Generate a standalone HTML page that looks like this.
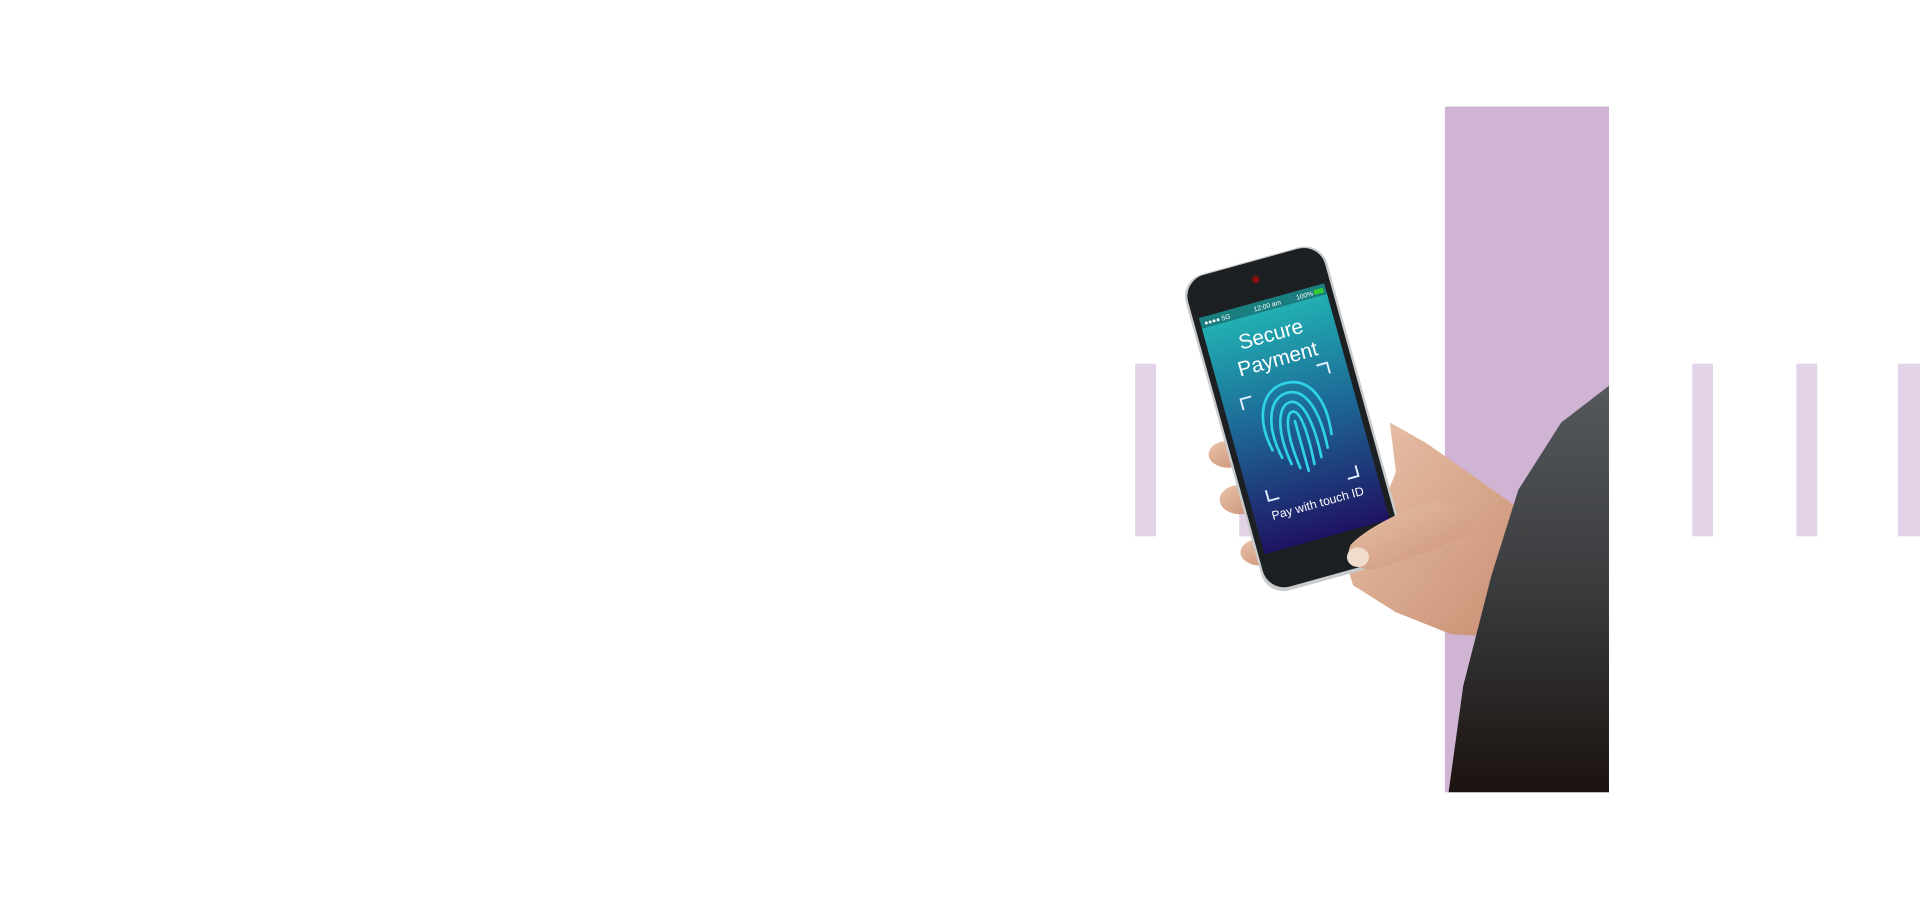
<!DOCTYPE html>
<html><head><meta charset="utf-8"><style>
html,body{margin:0;padding:0;background:#fff;width:1920px;height:900px;overflow:hidden}
svg{display:block}
text{font-family:"Liberation Sans",sans-serif}
</style></head><body>
<svg width="1920" height="900" viewBox="0 0 1568 735" xmlns="http://www.w3.org/2000/svg">
<defs>
<linearGradient id="scr" x1="0" y1="0" x2="0" y2="1">
<stop offset="0" stop-color="#22b7b6"/><stop offset="0.45" stop-color="#1d6d98"/><stop offset="1" stop-color="#1f1363"/>
</linearGradient>
<linearGradient id="slv" x1="0" y1="0" x2="0" y2="1">
<stop offset="0" stop-color="#55595c"/><stop offset="0.5" stop-color="#3a3b3d"/><stop offset="1" stop-color="#1b1310"/>
</linearGradient>
<linearGradient id="skin" x1="0" y1="0" x2="1" y2="1">
<stop offset="0" stop-color="#e9c3aa"/><stop offset="1" stop-color="#c98f73"/>
</linearGradient>
</defs>
<rect x="927" y="297" width="17" height="141" fill="#e2d3e8"/>
<rect x="1012" y="297" width="17" height="141" fill="#e2d3e8"/>
<rect x="1382" y="297" width="17" height="141" fill="#e2d3e8"/>
<rect x="1467" y="297" width="17" height="141" fill="#e2d3e8"/>
<rect x="1550" y="297" width="18" height="141" fill="#e2d3e8"/>
<rect x="1180" y="87" width="134" height="560" fill="#d0b4d4"/>
<g fill="url(#skin)">
<ellipse cx="1003" cy="371" rx="16" ry="11"/>
<ellipse cx="1013" cy="408" rx="17" ry="12"/>
<ellipse cx="1030" cy="451" rx="17" ry="11"/>
<path d="M1135 345 L1165 362 L1205 390 L1240 415 L1238 470 L1220 520 L1185 518 L1140 500 L1105 478 L1098 455 L1125 425 L1140 385 Z"/>
</g>
<path d="M1314 315 L1275 345 L1240 400 L1218 470 L1195 560 L1183 647 L1314 647 Z" fill="url(#slv)"/>
<g transform="translate(1057 342) rotate(-15.5)">
<rect x="-60" y="-134" width="120" height="268" rx="19" fill="#c9cbcd"/>
<rect x="-58" y="-133" width="116" height="264" rx="18" fill="#1d2023"/>
<circle cx="0" cy="-118" r="3" fill="#8a1010"/>
<rect x="-53" y="-100" width="106" height="200" fill="url(#scr)"/>
<rect x="-53" y="-100" width="106" height="9" fill="#155a5c" opacity="0.6"/>
<text x="-50" y="-93" font-size="5.5" fill="#fff">●●●● 5G</text>
<text x="-8" y="-93" font-size="5.5" fill="#fff">12:00 am</text>
<text x="28" y="-93" font-size="5.5" fill="#fff">100%</text>
<rect x="43" y="-97" width="8" height="4" fill="#3c3"/>
<text x="0" y="-66" font-size="17" fill="#fff" text-anchor="middle">Secure</text>
<text x="0" y="-45" font-size="17" fill="#fff" text-anchor="middle">Payment</text>
<g fill="none" stroke="#dfefff" stroke-width="1.6">
<path d="M-38 -18 v-9 h9"/><path d="M29 -37 h9 v9"/>
<path d="M-38 50 v9 h9"/><path d="M29 59 h9 v-9"/>
</g>
<g fill="none" stroke="#2ed3e8" stroke-width="2.2" stroke-linecap="round">
<path d="M-24 20 C-30 -8 -20 -30 0 -30 C20 -30 30 -10 26 20"/>
<path d="M-18 28 C-24 0 -16 -22 0 -22 C16 -22 22 0 20 30"/>
<path d="M-12 35 C-17 5 -10 -14 0 -14 C10 -14 15 5 13 36"/>
<path d="M-6 40 C-10 10 -6 -6 0 -6 C6 -6 8 10 6 40"/>
<path d="M0 2 V44"/>
</g>
<text x="0" y="75" font-size="10" fill="#fff" text-anchor="middle">Pay with touch ID</text>
</g>
<path d="M1103 445 C1115 432 1140 420 1160 412 C1180 405 1200 415 1205 430 C1195 442 1160 452 1130 463 C1112 469 1096 460 1103 445 Z" fill="url(#skin)"/>
<ellipse cx="1109" cy="455" rx="9" ry="8" fill="#f0dccd"/>
</svg>
</body></html>
